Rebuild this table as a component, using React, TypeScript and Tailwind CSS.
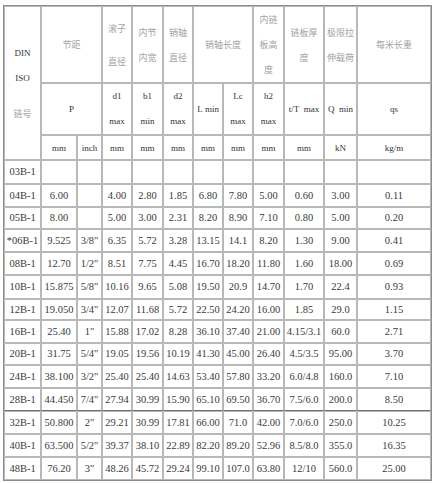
import React from 'react';

const rows: { id: string; cells: string[]; h: number; heavy?: boolean }[] = [
  { id: '03B-1', cells: ['', '', '', '', '', '', '', '', '', '', ''], h: 24 },
  { id: '04B-1', cells: ['6.00', '', '4.00', '2.80', '1.85', '6.80', '7.80', '5.00', '0.60', '3.00', '0.11'], h: 23 },
  { id: '05B-1', cells: ['8.00', '', '5.00', '3.00', '2.31', '8.20', '8.90', '7.10', '0.80', '5.00', '0.20'], h: 22 },
  { id: '*06B-1', cells: ['9.525', '3/8"', '6.35', '5.72', '3.28', '13.15', '14.1', '8.20', '1.30', '9.00', '0.41'], h: 23 },
  { id: '08B-1', cells: ['12.70', '1/2"', '8.51', '7.75', '4.45', '16.70', '18.20', '11.80', '1.60', '18.00', '0.69'], h: 23 },
  { id: '10B-1', cells: ['15.875', '5/8"', '10.16', '9.65', '5.08', '19.50', '20.9', '14.70', '1.70', '22.4', '0.93'], h: 24 },
  { id: '12B-1', cells: ['19.050', '3/4"', '12.07', '11.68', '5.72', '22.50', '24.20', '16.00', '1.85', '29.0', '1.15'], h: 21 },
  { id: '16B-1', cells: ['25.40', '1"', '15.88', '17.02', '8.28', '36.10', '37.40', '21.00', '4.15/3.1', '60.0', '2.71'], h: 23 },
  { id: '20B-1', cells: ['31.75', '5/4"', '19.05', '19.56', '10.19', '41.30', '45.00', '26.40', '4.5/3.5', '95.00', '3.70'], h: 22 },
  { id: '24B-1', cells: ['38.100', '3/2"', '25.40', '25.40', '14.63', '53.40', '57.80', '33.20', '6.0/4.8', '160.0', '7.10'], h: 23 },
  { id: '28B-1', cells: ['44.450', '7/4"', '27.94', '30.99', '15.90', '65.10', '69.50', '36.70', '7.5/6.0', '200.0', '8.50'], h: 23, heavy: true },
  { id: '32B-1', cells: ['50.800', '2"', '29.21', '30.99', '17.81', '66.00', '71.0', '42.00', '7.0/6.0', '250.0', '10.25'], h: 23 },
  { id: '40B-1', cells: ['63.500', '5/2"', '39.37', '38.10', '22.89', '82.20', '89.20', '52.96', '8.5/8.0', '355.0', '16.35'], h: 23 },
  { id: '48B-1', cells: ['76.20', '3"', '48.26', '45.72', '29.24', '99.10', '107.0', '63.80', '12/10', '560.0', '25.00'], h: 23 },
];

const widths = [37, 36, 25, 30, 31, 30, 30, 30, 31, 40, 33, 74];
const units = ['mm', 'inch', 'mm', 'mm', 'mm', 'mm', 'mm', 'mm', 'mm', 'kN', 'kg/m'];

// header cells carry their own small font so the row strut stays small
const cell = 'border border-[#b8b8b8] p-0 text-center align-middle text-[9px] leading-[12px]';
const zh = 'text-[#a3a3a3] text-[9px] [font-family:"Noto_Sans_CJK_SC",sans-serif]';
const lat = 'text-[#333] text-[9px]';
const dataCell = 'border border-[#b8b8b8] p-0 text-center align-middle text-[10.5px] leading-[12px] text-[#3a3a3a] whitespace-nowrap';

export default function App() {
  return (
    <div className="bg-white w-[439px] h-[483px] pt-[5px] pl-[3px] text-[9px] leading-[12px] [font-family:'Liberation_Serif',serif]">
      <table className="table-fixed border-separate border-spacing-0 border border-[#8c8c8c] w-[429px]">
        <colgroup>
          {widths.map((w, i) => (
            <col key={i} style={{ width: w }} />
          ))}
        </colgroup>
        <tbody>
          <tr className="h-[77px]">
            <td rowSpan={3} className={cell}>
              <div className={`${lat} leading-[14px]`}>DIN</div>
              <div className={`${lat} leading-[14px] mt-[11px]`}>ISO</div>
              <div className={`${zh} leading-[14px] mt-[22px]`}>链号</div>
            </td>
            <td colSpan={2} className={cell}>
              <span className={zh}>节距</span>
            </td>
            <td className={cell}>
              <div className={`${zh} leading-[33px]`}>
                滚子<br />直径
              </div>
            </td>
            <td className={cell}>
              <div className={`${zh} leading-[25px]`}>
                内节<br />内宽
              </div>
            </td>
            <td className={cell}>
              <div className={`${zh} leading-[25px]`}>
                销轴<br />直径
              </div>
            </td>
            <td colSpan={2} className={cell}>
              <span className={zh}>销轴长度</span>
            </td>
            <td className={cell}>
              <div className={`${zh} leading-[25px]`}>
                内链<br />板高<br />度
              </div>
            </td>
            <td className={cell}>
              <div className={`${zh} leading-[25px]`}>
                链板厚<br />度
              </div>
            </td>
            <td className={cell}>
              <div className={`${zh} leading-[25px]`}>
                极限拉<br />伸载荷
              </div>
            </td>
            <td className={cell}>
              <span className={zh}>每米长重</span>
            </td>
          </tr>
          <tr className="h-[50px]">
            <td colSpan={2} className={cell}>
              <span className={lat}>P</span>
            </td>
            <td className={cell}>
              <div className={`${lat} leading-[25px]`}>d1<br />max</div>
            </td>
            <td className={cell}>
              <div className={`${lat} leading-[25px]`}>b1<br />min</div>
            </td>
            <td className={cell}>
              <div className={`${lat} leading-[25px]`}>d2<br />max</div>
            </td>
            <td className={cell}>
              <span className={`${lat} whitespace-nowrap`}>L&nbsp;min</span>
            </td>
            <td className={cell}>
              <div className={`${lat} leading-[25px]`}>Lc<br />max</div>
            </td>
            <td className={cell}>
              <div className={`${lat} leading-[25px]`}>h2<br />max</div>
            </td>
            <td className={cell}>
              <span className={`${lat} whitespace-nowrap`}>t/T&nbsp;&nbsp;max</span>
            </td>
            <td className={cell}>
              <span className={`${lat} whitespace-nowrap`}>Q&nbsp;&nbsp;min</span>
            </td>
            <td className={cell}>
              <span className={lat}>qs</span>
            </td>
          </tr>
          <tr className="h-[25px]">
            {units.map((u, i) => (
              <td key={i} className={cell}>
                <span className={`${lat} text-[8.5px]`}>{u}</span>
              </td>
            ))}
          </tr>
          {rows.map((r) => (
            <tr key={r.id} style={{ height: r.h }}>
              <td className={`${dataCell} ${r.heavy ? 'border-b-[#6f6f6f]' : ''}`}>{r.id}</td>
              {r.cells.map((c, i) => (
                <td key={i} className={`${dataCell} ${r.heavy ? 'border-b-[#6f6f6f]' : ''}`}>
                  {c}
                </td>
              ))}
            </tr>
          ))}
        </tbody>
      </table>
    </div>
  );
}
